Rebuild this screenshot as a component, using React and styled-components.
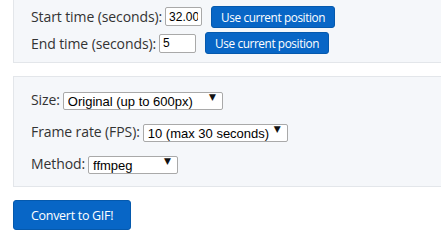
import React, { useState } from 'react';
import styled, { createGlobalStyle } from 'styled-components';

const Global = createGlobalStyle`
  body {
    margin: 0;
    background: #ffffff;
    font-family: "Open Sans", "Noto Sans", sans-serif;
    overflow: hidden;
  }
`;

const Side = styled.div`
  padding-left: 13px;
`;

const Panel = styled.div`
  background: #f5f7fa;
  border: 1px solid #e3e6ea;
  border-top: ${(p) => (p.$open ? 'none' : '1px solid #e3e6ea')};
  border-right: none;
  padding: ${(p) => p.$pad};
  margin-bottom: 13px;
  display: flex;
  flex-direction: column;
  gap: ${(p) => p.$gap}px;
`;

const Row = styled.div`
  display: flex;
  align-items: center;
  height: ${(p) => p.$h || 22}px;
`;

const Label = styled.label`
  font-size: 14px;
  color: #333;
  margin-right: 3px;
  letter-spacing: -0.1px;
`;

const TimeInput = styled.input`
  box-sizing: border-box;
  width: 37px;
  height: 19px;
  border: 1px solid #a9a9a9;
  border-radius: 2px;
  padding: 0 3px;
  font-family: "Liberation Sans", Arial, sans-serif;
  font-size: 12px;
  color: #000;
  background: #fff;
  margin-right: 9px;
`;

const BlueButton = styled.button`
  background: #0866c6;
  color: #fff;
  border: 1px solid #0559ad;
  border-radius: 3px;
  font-family: "Open Sans", sans-serif;
  font-size: ${(p) => (p.$big ? 12.5 : 11.8)}px;
  letter-spacing: ${(p) => (p.$big ? -0.3 : -0.4)}px;
  height: ${(p) => (p.$big ? 30 : 22)}px;
  padding: ${(p) => (p.$big ? '0 17px' : '0 9px')};
  cursor: pointer;
`;

const SelectWrap = styled.div`
  position: relative;
  display: inline-block;
`;

const Select = styled.select`
  appearance: none;
  box-sizing: border-box;
  width: ${(p) => p.$w}px;
  height: 18px;
  border: 1px solid #a9a9a9;
  border-radius: 2px;
  background: #fff;
  font-family: "Liberation Sans", Arial, sans-serif;
  font-size: 13px;
  color: #000;
  padding: 0 0 0 4px;
  outline: none;
`;

const Arrow = styled.span`
  position: absolute;
  right: 7px;
  top: 3px;
  font-size: 9px;
  color: #111;
  pointer-events: none;
  font-family: "DejaVu Sans", sans-serif;
`;

const Dropdown = ({ w, value, options, onChange }) => (
  <SelectWrap>
    <Select $w={w} value={value} onChange={(e) => onChange(e.target.value)}>
      {options.map((o) => (
        <option key={o}>{o}</option>
      ))}
    </Select>
    <Arrow>▼</Arrow>
  </SelectWrap>
);

export default function App() {
  const [start, setStart] = useState('32.002');
  const [end, setEnd] = useState('5');
  const [size, setSize] = useState('Original (up to 600px)');
  const [fps, setFps] = useState('10 (max 30 seconds)');
  const [method, setMethod] = useState('ffmpeg');

  return (
    <Side>
      <Global />
      <Panel $open $pad="6px 0 8px 17px" $gap={5}>
        <Row $h={21}>
          <Label>Start time (seconds):</Label>
          <TimeInput value={start} onChange={(e) => setStart(e.target.value)} />
          <BlueButton>Use current position</BlueButton>
        </Row>
        <Row>
          <Label>End time (seconds):</Label>
          <TimeInput value={end} onChange={(e) => setEnd(e.target.value)} />
          <BlueButton>Use current position</BlueButton>
        </Row>
      </Panel>
      <Panel $pad="13px 0 13px 17px" $gap={13}>
        <Row $h={19}>
          <Label>Size:</Label>
          <Dropdown
            w={160}
            value={size}
            onChange={setSize}
            options={['Original (up to 600px)', '480px', '320px']}
          />
        </Row>
        <Row $h={19}>
          <Label>Frame rate (FPS):</Label>
          <Dropdown
            w={145}
            value={fps}
            onChange={setFps}
            options={['10 (max 30 seconds)', '15 (max 20 seconds)', '20 (max 15 seconds)']}
          />
        </Row>
        <Row $h={19}>
          <Label>Method:</Label>
          <Dropdown w={90} value={method} onChange={setMethod} options={['ffmpeg', 'imagemagick']} />
        </Row>
      </Panel>
      <BlueButton $big>Convert to GIF!</BlueButton>
    </Side>
  );
}
